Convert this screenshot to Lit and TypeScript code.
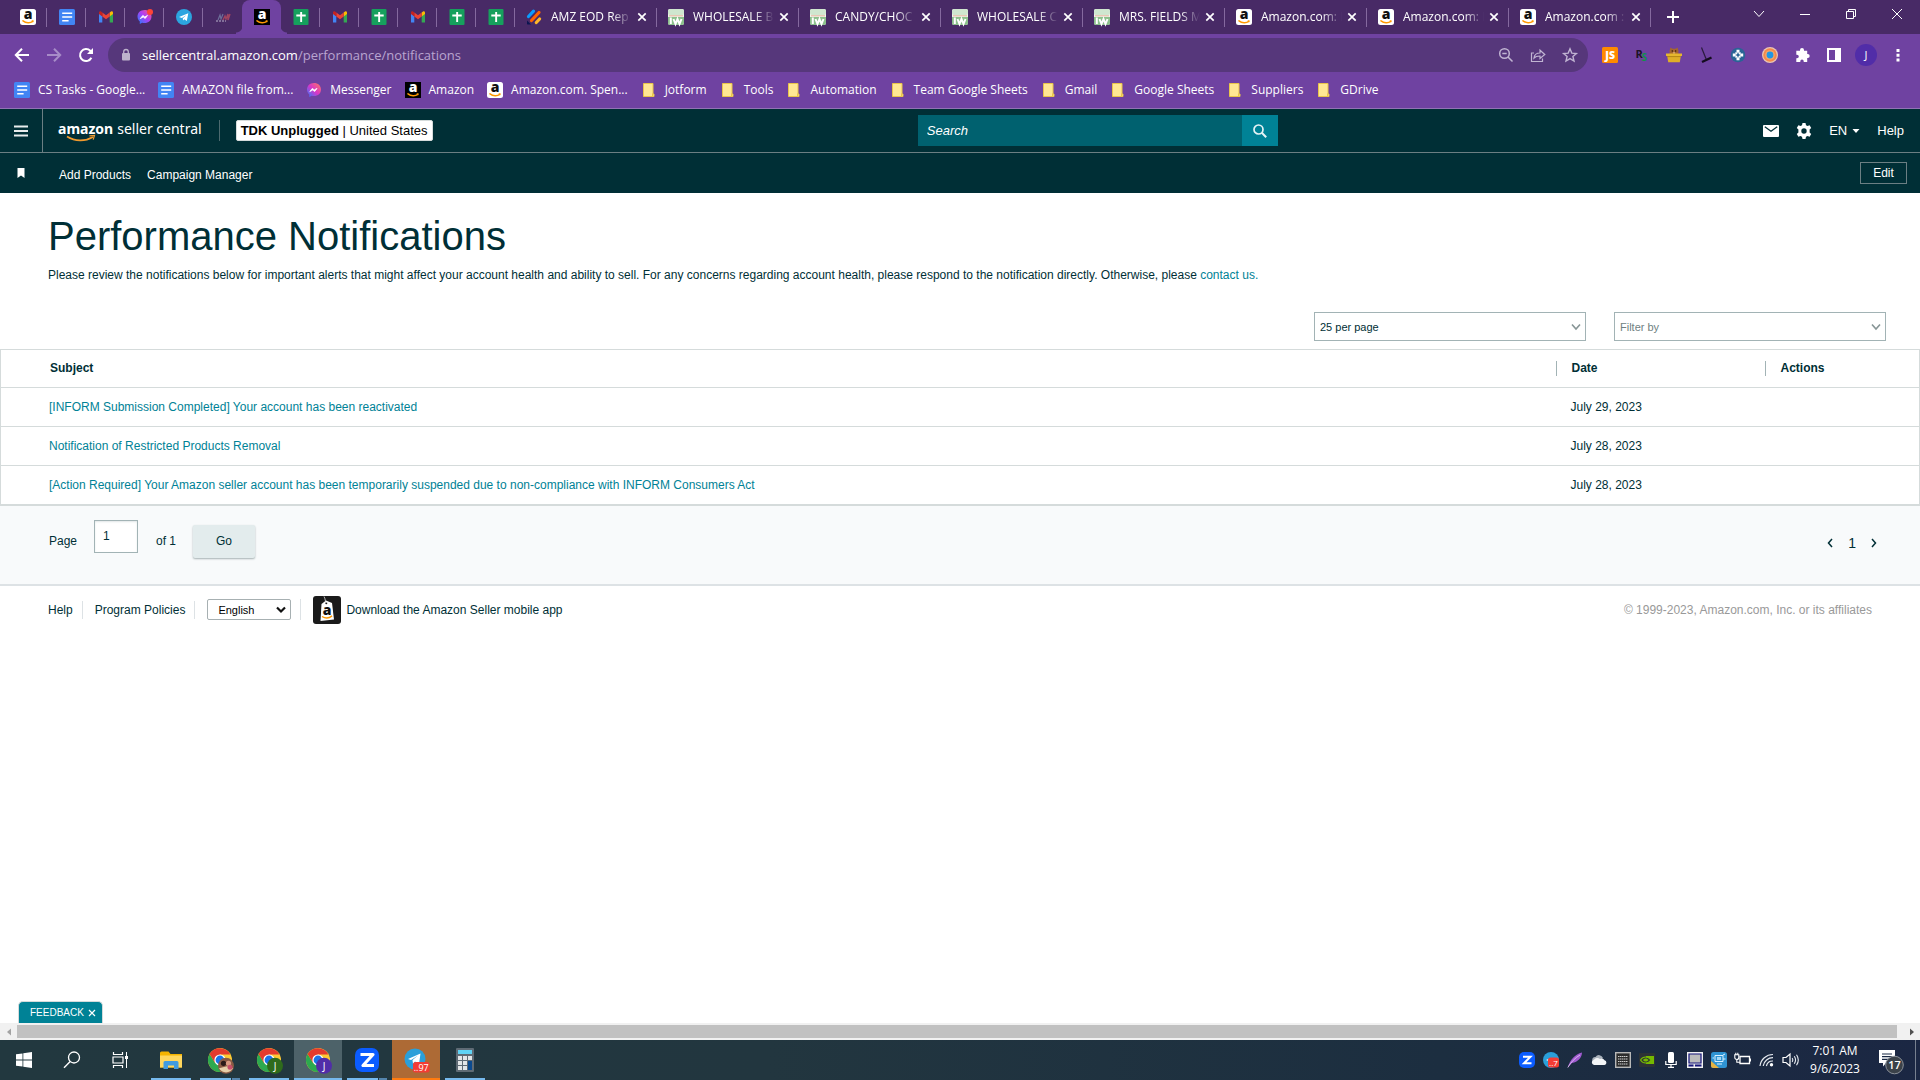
import { LitElement, html, svg, css } from "lit";
import type { TemplateResult } from "lit";
import { customElement, property, state } from "lit/decorators.js";
import { classMap } from "lit/directives/class-map.js";

/* ---------- icon library ---------- */

const smile = svg`<path d="M3 11.8c3 2.400 7.200 2.500 9.800.6" fill="none" stroke="#f90" stroke-width="1.5" stroke-linecap="round"/><path d="M11.400 11.400l2.200-.2-.5 2.200z" fill="#f90"/>`;

const chromeBase = svg`
  <circle cx="12" cy="12" r="12" fill="#fcc934"/>
  <path d="M1.6 6A12 12 0 0 0 12 24L17 14.8 12 12 7 14.8Z" fill="#2da94f"/>
  <path d="M1.6 6A12 12 0 0 1 22.4 6.5H12V12L7 14.8Z" fill="#e33b2e"/>
  <circle cx="12" cy="12" r="5.6" fill="#fff"/><circle cx="12" cy="12" r="4.4" fill="#1a73e8"/>`;

interface Glyph { w: number; h: number; art: TemplateResult<2> }
const g = (w: number, h: number, art: TemplateResult<2>): Glyph => ({ w, h, art });

const glyphs: Record<string, Glyph> = {
  amazonLight: g(16, 16, svg`<rect width="16" height="16" rx="2.5" fill="#fff"/><text x="8" y="9.6" text-anchor="middle" font-family="Open Sans, sans-serif" font-weight="800" font-size="14" fill="#111">a</text>${smile}`),
  amazonDark: g(16, 16, svg`<rect width="16" height="16" fill="#000"/><text x="8" y="9.6" text-anchor="middle" font-family="Open Sans, sans-serif" font-weight="800" font-size="14" fill="#fff">a</text>${smile}`),
  doc: g(16, 16, svg`<rect width="16" height="16" rx="1.5" fill="#4285f4"/><path d="M3.2 3.5h10v1.6h-10zM3.2 7.2h10v1.6h-10zM3.2 10.9h6.4v1.6H3.2z" fill="#fff"/>`),
  gmail: g(16, 16, svg`<path d="M1 13.5V4.5L4.3 7v6.5z" fill="#4285f4"/><path d="M15 13.5V4.5L11.7 7v6.5z" fill="#34a853"/><path d="M11.7 3.4L13 2.6c1-.6 2 0 2 1.200V5l-3.300 2.500z" fill="#fbbc04"/><path d="M4.300 3.400L8 6.200l3.700-2.800v4.100L8 10.300 4.300 7.500z" fill="#ea4335"/><path d="M1 5V3.800c0-1.200 1-1.800 2-1.200l1.300.8v4.100z" fill="#c5221f"/>`),
  messengerDot: g(16, 16, svg`<path d="M7.500 1C3.500 1 .5 3.800.5 7.500c0 2 .9 3.800 2.300 5v2.500l2.300-1.200c.8.200 1.600.3 2.400.3 4 0 7-2.800 7-6.600S11.500 1 7.500 1z" fill="url(#msg)"/><path d="M3.300 9.600l2.500-3.200 2 1.500 2.700-1.500L8.200 9.500 6.200 8z" fill="#fff" stroke="#fff" stroke-width=".8"/><circle cx="13" cy="3" r="3" fill="#ff4438"/><defs><linearGradient id="msg" x1="1" y1="0" x2="0" y2="1"><stop offset="0" stop-color="#ff5f6d"/><stop offset=".45" stop-color="#b13cf5"/><stop offset="1" stop-color="#1a84ff"/></linearGradient></defs>`),
  messenger: g(16, 16, svg`<path d="M8 1C4 1 1 3.800 1 7.500c0 2 .9 3.800 2.300 5v2.500l2.300-1.200c.8.200 1.600.3 2.400.3 4 0 7-2.800 7-6.600S12 1 8 1z" fill="url(#msb)"/><path d="M3.800 9.600l2.500-3.200 2 1.500L11 6.400 8.700 9.500l-2-1.500z" fill="#fff" stroke="#fff" stroke-width=".8"/><defs><linearGradient id="msb" x1="1" y1="0" x2="0" y2="1"><stop offset="0" stop-color="#ff7a5c"/><stop offset=".5" stop-color="#d936c8"/><stop offset="1" stop-color="#2b7bff"/></linearGradient></defs>`),
  telegram: g(16, 16, svg`<circle cx="8" cy="8" r="8" fill="#2ca5e0"/><path d="M3 7.900L12.300 4.200 10.800 12 8.300 10.200 7 11.500 6.800 9.300 10.500 6 5.900 8.900z" fill="#fff"/>`),
  script: g(16, 16, svg`<path d="M3 11l2-5 1 4 2-5" fill="none" stroke="#6d6f98" stroke-width="1.200"/><path d="M8 11l2-4 1 3 2-5v6l2-6" fill="none" stroke="#a04460" stroke-width="1.400"/><path d="M1 12h10" stroke="#b9b3cc" stroke-width="1" stroke-dasharray="2 1"/>`),
  sheet: g(16, 16, svg`<rect x=".5" width="15" height="16" rx="1" fill="#16a05d"/><path d="M7.200 3h1.900v10H7.200zM3.300 5.600h9.400v1.900H3.300z" fill="#fff"/>`),
  jotform: g(16, 16, svg`<g stroke-linecap="round" fill="none" stroke-width="3.200"><path d="M2.500 7.500l5-5.300" stroke="#0a9bff"/><path d="M5.500 11.500l7.500-8" stroke="#ff6100"/><path d="M10.300 13.500l3.300-3.500" stroke="#ffb629"/></g><path d="M1 11.500L5 15.600H2c-.6 0-1-.4-1-1z" fill="#0a1551"/>`),
  wholesale: g(16, 16, svg`<rect width="16" height="16" rx="2" fill="#eef5ec"/><rect width="16" height="6" rx="2" fill="#cfe6cf"/><path d="M0 8h16v6a2 2 0 0 1-2 2H2a2 2 0 0 1-2-2z" fill="#8cc08c"/><path d="M1 6.800h14" stroke="#e8a088" stroke-width=".8"/><path d="M2.800 8.500V15M5.500 10l2 5 2-5 2 5 2-5" stroke="#fff" stroke-width="2" fill="none"/>`),
  close: g(10, 10, svg`<path d="M1.300 1.300l7.400 7.400M8.700 1.300L1.300 8.700" stroke="#fff" stroke-width="1.700"/>`),
  plus: g(14, 14, svg`<path d="M7 1v12M1 7h12" stroke="#fff" stroke-width="2"/>`),
  winChevron: g(12, 12, svg`<path d="M1 3l5 5.500L11 3" fill="none" stroke="#fff"/>`),
  winMin: g(12, 12, svg`<path d="M1 6.500h10" stroke="#fff"/>`),
  winRestore: g(12, 12, svg`<path d="M1.500 3.500h7v7h-7zM3.500 3.500v-2h7v7h-2" fill="none" stroke="#fff"/>`),
  winClose: g(12, 12, svg`<path d="M1 1l10 10M11 1L1 11" stroke="#fff"/>`),
  back: g(16, 16, svg`<path d="M15 8H2.500M8 1.800L1.800 8 8 14.200" fill="none" stroke="#fff" stroke-width="2"/>`),
  forward: g(16, 16, svg`<path d="M1 8h12.500M8 1.800L14.200 8 8 14.200" fill="none" stroke="#a78cc8" stroke-width="2"/>`),
  reload: g(16, 16, svg`<path d="M13.400 10.800A6 6 0 1 1 12.300 3.800L14 5.500" fill="none" stroke="#fff" stroke-width="2"/><path d="M15 1v6H9z" fill="#fff"/>`),
  lock: g(12, 14, svg`<rect x="2" y="5" width="8" height="7.500" rx="1" fill="#bdb3cc"/><path d="M3.700 5.500V3.800a2.300 2.300 0 0 1 4.600 0v1.700" fill="none" stroke="#bdb3cc" stroke-width="1.300"/>`),
  zoomOut: g(16, 16, svg`<circle cx="6.500" cy="6.500" r="4.800" fill="none" stroke="#c0b4d2" stroke-width="1.500"/><path d="M10 10l4.500 4.500M4.300 6.500h4.400" stroke="#c0b4d2" stroke-width="1.500"/>`),
  share: g(16, 16, svg`<path d="M4 6H1.500v8.500h11v-3M4 11c.4-3.500 2.500-5 6-5V3.200L14.800 7.500 10 11.500V9c-3 0-4.700.5-6 2z" fill="none" stroke="#c0b4d2" stroke-width="1.200"/>`),
  star: g(16, 16, svg`<path d="M8 1.800l1.800 4.300 4.600.4-3.500 3 1.100 4.500L8 11.600 4 14l1.100-4.500-3.500-3 4.600-.4z" fill="none" stroke="#c0b4d2" stroke-width="1.400"/>`),
  js: g(16, 16, svg`<rect width="16" height="16" rx="1.500" fill="#ff8a00"/><text x="8.200" y="12" text-anchor="middle" font-family="Open Sans, sans-serif" font-weight="800" font-size="10.500" fill="#fff">JS</text>`),
  rs: g(16, 16, svg`<text x="1.500" y="11" font-family="Open Sans, sans-serif" font-weight="700" font-size="11" fill="#1c1226">R</text><text x="7.500" y="13.500" font-family="Open Sans, sans-serif" font-weight="700" font-size="10" fill="#0f9149">S</text>`),
  bear: g(16, 16, svg`<path d="M3.600 8V3.500L4.500.6l2 1.200h3l2-1.200.9 2.900V8z" fill="#a5652e"/><circle cx="6.300" cy="4" r=".7" fill="#2a1406"/><circle cx="9.700" cy="4" r=".7" fill="#2a1406"/><path d="M6.800 5.500h2.400L8 7z" fill="#f4d6b0"/><path d="M0 6.500h16v2.500H0z" fill="#e5b72d"/><path d="M1.200 9h13.600l-1 6.300H2.200z" fill="#dfae28"/><path d="M1.200 9.600h13.600" stroke="#a77a10" fill="none" stroke-width=".8"/>`),
  gavel: g(16, 16, svg`<path d="M3.500.5l5 12.500" stroke="#2a1a3c" stroke-width="1.200"/><path d="M4 15l9.500-4.500" stroke="#140c1e" stroke-width="2.400"/>`),
  helium: g(16, 16, svg`<circle cx="8" cy="8" r="7.300" fill="#2a6496"/><path d="M6.500 2.800h3v3h-3zM6.500 10.200h3v3h-3zM2.800 6.500h3v3h-3zM10.200 6.500h3v3h-3z" fill="#fff"/><path d="M5.500 5.500l5 5M10.500 5.500l-5 5" stroke="#fff" stroke-width="1.600"/><circle cx="8" cy="8" r="1.400" fill="#2a6496"/>`),
  orb: g(16, 16, svg`<circle cx="8" cy="8" r="8" fill="#eac6b4"/><circle cx="8" cy="8" r="6.800" fill="#f5894a"/><circle cx="8" cy="8" r="4.800" fill="#f3a76b"/><circle cx="8" cy="8" r="3.400" fill="#2196e3"/>`),
  puzzle: g(16, 16, svg`<path d="M6 3a2 2 0 0 1 4 0v.8h3.200V7h.5a2 2 0 0 1 0 4h-.5v4H9.700v-.8a1.700 1.700 0 0 0-3.400 0v.8H2.300v-3.700h.7a1.800 1.800 0 0 0 0-3.600h-.7V3.800H6z" fill="#fff"/>`),
  panel: g(16, 16, svg`<path d="M1 1h14v14H1zM3 3v10h6V3z" fill="#fff" fill-rule="evenodd"/>`),
  avatar: g(22, 22, svg`<circle cx="11" cy="11" r="11" fill="#512da8"/><text x="11" y="15" text-anchor="middle" font-family="Open Sans, sans-serif" font-size="11" fill="#fff">J</text>`),
  dots: g(4, 16, svg`<path d="M.5 2h3v3h-3zM.5 6.700h3v3h-3zM.5 11.400h3v3h-3z" fill="#fff"/>`),
  folder: g(16, 16, svg`<path d="M2.500 1.500h9.500v10.500h1v2.500H2.500z" fill="#ffe793" stroke="#e9c54a"/><path d="M11.500 14v-2.500" stroke="#e9c54a"/>`),
  menu: g(14, 12, svg`<path d="M0 1.500h14M0 6h14M0 10.500h14" stroke="#e8eded" stroke-width="1.800"/>`),
  swoosh: g(30, 7, svg`<path d="M1 1.500c8 5 18 5.200 26 .5" fill="none" stroke="#f09a2e" stroke-width="1.600"/><path d="M23.500.8l5-.4-1.300 4.200" fill="none" stroke="#f09a2e" stroke-width="1.200"/>`),
  search: g(16, 16, svg`<circle cx="6.500" cy="6.500" r="4.500" fill="none" stroke="#e6f4f6" stroke-width="1.700"/><path d="M9.800 9.800l4.400 4.400" stroke="#e6f4f6" stroke-width="2"/>`),
  mail: g(16, 12, svg`<rect width="16" height="12" rx="1" fill="#fff"/><path d="M1.800 1.800L8 6.200l6.200-4.400" fill="none" stroke="#002f36" stroke-width="1.300"/>`),
  gear: g(16, 16, svg`<path d="M6.500 0h3l.5 2.200 1.500.9 2.100-.8 1.600 2.700L13.600 6.600v2.800l1.600 1.600-1.600 2.700-2.100-.8-1.500.9-.5 2.200h-3L6 13.800l-1.500-.9-2.100.8L.8 11l1.600-1.600V6.600L.8 5l1.600-2.700 2.100.8L6 2.200zM8 5.300a2.700 2.700 0 1 0 0 5.400 2.700 2.700 0 0 0 0-5.400z" fill="#fff" fill-rule="evenodd"/>`),
  caret: g(8, 4, svg`<path d="M.5 0h7L4 4z" fill="#fff"/>`),
  flag: g(10, 10, svg`<path d="M1.500 0h7v10L5 7.500 1.500 10z" fill="#fff"/>`),
  chevron: g(10, 8, svg`<path d="M1 1.500l4 4.500 4-4.500" fill="none" stroke="#879596" stroke-width="1.600"/>`),
  chevronDark: g(10, 8, svg`<path d="M1 1.500L5 5.500 9 1.500" fill="none" stroke="#111" stroke-width="2.200"/>`),
  prev: g(6, 10, svg`<path d="M5 1L1.500 5 5 9" fill="none" stroke="#002f36" stroke-width="1.500"/>`),
  next: g(6, 10, svg`<path d="M1 1l3.500 4L1 9" fill="none" stroke="#002f36" stroke-width="1.500"/>`),
  app: g(28, 28, svg`<rect width="28" height="28" rx="3" fill="#1a1a1a"/><path d="M8.500 8L13 4.500l6 2.500 2 16.500L7.500 25z" fill="#fff"/><circle cx="13.300" cy="7.200" r="1" fill="#1a1a1a"/><path d="M13.300 7C12 5 12.500 3 11 .5" stroke="#ddd" stroke-width=".8" fill="none"/><text x="14" y="18.500" text-anchor="middle" font-family="Open Sans, sans-serif" font-weight="800" font-size="14" fill="#111">a</text><path d="M9 20.500c3.500 2.200 7 2 10-.6" stroke="#f90" stroke-width="1.400" fill="none"/>`),
  feedbackX: g(8, 8, svg`<path d="M1 1l6 6M7 1L1 7" stroke="#fff" stroke-width="1.200"/>`),
  left: g(4, 8, svg`<path d="M4 .5v7L0 4z" fill="#a3a3a3"/>`),
  right: g(4, 8, svg`<path d="M0 .5v7L4 4z" fill="#505050"/>`),
  windows: g(16, 16, svg`<path d="M0 2.300L6.500 1.400v6.200H0zM7.300 1.300L16 0v7.600H7.300zM0 8.400h6.500v6.200L0 13.700zM7.300 8.400H16V16l-8.700-1.300z" fill="#fff"/>`),
  lens: g(18, 18, svg`<circle cx="11" cy="6.500" r="5.500" fill="none" stroke="#fff" stroke-width="1.300"/><path d="M7.200 10.500L1 16.800" stroke="#fff" stroke-width="1.400"/>`),
  taskView: g(16, 16, svg`<path d="M1.500 0v2.500h9V0M1.500 16v-2.500h9V16M1 5h10v6H1z" fill="none" stroke="#fff" stroke-width="1.200"/><path d="M14.500 0v16" stroke="#fff"/><path d="M13 4h3v3h-3z" fill="#fff"/>`),
  explorer: g(22, 20, svg`<path d="M0 3a1.500 1.500 0 0 1 1.500-1.500h7L10.500 4H22v13.500H0z" fill="#f5b400"/><path d="M0 5.500h22v12H0z" fill="#ffd75e"/><path d="M3.500 19v-6.500A1.500 1.500 0 0 1 5 11h12a1.500 1.500 0 0 1 1.500 1.500V19H14v-3.500H8V19z" fill="#3f9be0"/>`),
  chromePhoto: g(24, 24, svg`${chromeBase}<circle cx="18" cy="17.800" r="8" fill="#8a5a44"/><circle cx="15.500" cy="15.300" r="2.600" fill="#2a1a18"/><circle cx="20.500" cy="15.300" r="2.600" fill="#d99a80"/><path d="M11 20.300a8 8 0 0 0 14 0l-6-2z" fill="#e7cfa8"/><circle cx="22" cy="19.300" r="2.500" fill="#c8506a"/>`),
  chromeGreen: g(24, 24, svg`${chromeBase}<circle cx="18" cy="17.800" r="8" fill="#2f6b1c"/><text x="18" y="21.500" text-anchor="middle" font-family="Open Sans, sans-serif" font-size="10" fill="#fff">J</text>`),
  chromePurple: g(24, 24, svg`${chromeBase}<circle cx="18" cy="17.800" r="8" fill="#512da8"/><text x="18" y="21.500" text-anchor="middle" font-family="Open Sans, sans-serif" font-size="10" fill="#fff">J</text>`),
  zoomApp: g(24, 24, svg`<rect width="24" height="24" rx="7" fill="#0b5cff"/><path d="M5.500 6.500h12.500L8 17.500h11" fill="none" stroke="#fff" stroke-width="3.200" stroke-linejoin="round"/>`),
  telegramApp: g(28, 26, svg`<circle cx="13" cy="12" r="10.500" fill="#2a9fd9"/><path d="M6 12L18.500 6.500 17 17l-4-2.500L11 17l-.5-4L16 8.500 9 13z" fill="#fff"/><rect x="11" y="15" width="16.500" height="10.500" rx="2.500" fill="#f23c34"/><text x="19.200" y="23.800" text-anchor="middle" font-family="Open Sans, sans-serif" font-size="9" fill="#fff">..97</text>`),
  calc: g(18, 24, svg`<rect width="18" height="24" rx="1" fill="#5f6b75"/><path d="M2 2h14v4H2z" fill="#5fd3f5"/><path d="M2 8h4v4H2zM7 8h4v4H7zM12 8h4v4h-4zM2 13h4v4H2zM7 13h4v4H7zM2 18h4v4H2zM7 18h4v4H7z" fill="#e3e6e8"/><path d="M12 13h4v9h-4z" fill="#0b4a8f"/>`),
  trayZoom: g(16, 16, svg`<rect width="16" height="16" rx="5" fill="#0b5cff"/><path d="M4 4.700h7.500L5 11.300h7.500" fill="none" stroke="#fff" stroke-width="2"/>`),
  trayTelegram: g(16, 16, svg`<circle cx="8" cy="8" r="8" fill="#2a9fd9"/><path d="M3 8l5-2v4z" fill="#fff"/><rect x="5" y="5.500" width="11" height="10" rx="2.500" fill="#f23c34"/><text x="10.500" y="13.800" text-anchor="middle" font-family="Open Sans, sans-serif" font-size="8" fill="#fff">..7</text>`),
  feather: g(16, 16, svg`<path d="M1 15C3 8 8 2 15 .5c0 5-4 9.500-10 10.500z" fill="#a05bd0"/><path d="M.8 15.500C4 10 8 6 13 3" stroke="#e2bff5" fill="none" stroke-width=".9"/>`),
  cloud: g(16, 16, svg`<path d="M4 11a3 3 0 0 1 .5-6 4.200 4.200 0 0 1 7.500 1l-6 5z" fill="#a9b1bb"/><path d="M3 13a2.700 2.700 0 0 1 0-5.300 4 4 0 0 1 6-.7 3.300 3.300 0 0 1 4.500 1.300A2.400 2.400 0 0 1 13.500 13z" fill="#f3f5f7"/>`),
  chip: g(16, 16, svg`<rect x=".7" y=".7" width="14.600" height="14.600" fill="#2c2c2c" stroke="#b8b8b8" stroke-width="1.400"/><path d="M3 4.500h10M3 7h10M3 9.500h10M3 12h10" stroke="#cfcfcf" stroke-width="1" stroke-dasharray="1.500 .5"/>`),
  nvidia: g(16, 16, svg`<rect y="1" width="16" height="14" rx="1" fill="#2d3236"/><path d="M7 4h8v8H7z" fill="#76b900"/><path d="M1.500 8C4 4 9 4 12 8c-3 4-8 4-10.500 0z" fill="#2d3236" stroke="#76b900" stroke-width="1.100"/><path d="M4 8c1.500-2 4-2 5.500 0-1.500 2-4 2-5.500 0z" fill="#76b900"/>`),
  mic: g(16, 16, svg`<rect x="5" y="0" width="6" height="11" rx="1.500" fill="#fff"/><path d="M2.800 9v3.500h10.400V9M8 12.500V15M5 15.400h6" fill="none" stroke="#fff" stroke-width="1.200"/>`),
  monitor: g(16, 16, svg`<rect x=".6" y=".6" width="14.800" height="14.800" fill="#e6e6e6" stroke="#f2f2f2" stroke-width="1.200"/><path d="M2 2h12v9H2z" fill="#bcbcbc" stroke="#15157c" stroke-width="1.200"/><path d="M1.500 12.500h5v2h-5zM8 12.500h6.500v2H8z" fill="#15157c"/>`),
  intel: g(16, 16, svg`<rect width="16" height="16" rx="2.500" fill="#2f93d2"/><path d="M0 9v4.500A2.500 2.500 0 0 0 2.500 16H8z" fill="#e6b23f"/><path d="M4 3.500h8v6H4zM6 12h5M12 3l2-1M12 7h2.500M3 6H1.500" fill="none" stroke="#d9f0ff"/><path d="M6 5h4v3H6z" fill="#a3d8f7"/>`),
  battery: g(16, 16, svg`<path d="M5 4.500h9.500v7H5z" fill="none" stroke="#fff" stroke-width="1.300"/><path d="M14.500 6.500H16v3h-1.500z" fill="#fff"/><path d="M-.2 2.500v3a2 2 0 0 0 4 0v-3M.8.800v2M2.800.800v2M-.8 2.800h5.200M1.800 7.500v2.800H5" fill="none" stroke="#fff" stroke-width="1.100"/>`),
  wifi: g(16, 16, svg`<path d="M1 14A13 13 0 0 1 14 2.500M4.200 14A9.800 9.800 0 0 1 14 5.700M7.400 14A6.500 6.500 0 0 1 14 9" fill="none" stroke="#e6eaf0" stroke-width="1.200"/><circle cx="12.500" cy="12.800" r="1.700" fill="#fff"/>`),
  sound: g(16, 16, svg`<path d="M0 5.500h3L7 2v12l-4-3.500H0z" fill="none" stroke="#fff" stroke-width="1.200"/><path d="M9.200 6c.8 1.200.8 2.800 0 4M11.300 4.300c1.500 2.200 1.500 5.200 0 7.400M13.500 2.700c2.200 3.200 2.200 7.400 0 10.600" fill="none" stroke="#e6eaf0" stroke-width="1.100"/>`),
  notice: g(28, 28, svg`<path d="M1 4h16v13H8l-3 3.500V17H1z" fill="#fff"/><path d="M4 8h10M4 10.700h10M4 13.400h7" stroke="#1b2a44" stroke-width="1.200"/><circle cx="16.500" cy="19" r="8.800" fill="#3a4149" stroke="#8b9199" stroke-width="1"/><text x="16.500" y="23" text-anchor="middle" font-family="Open Sans, sans-serif" font-weight="600" font-size="11" fill="#fff">17</text>`),
};

const icon = (name: string) => {
  const { w, h, art } = glyphs[name];
  return html`<svg class="icon" width=${w} height=${h} viewBox="0 0 ${w} ${h}" aria-hidden="true">${art}</svg>`;
};

const reset = css`
  :host { display: block; }
  * { box-sizing: border-box; }
  .icon { display: block; flex: none; overflow: visible; }
  button, input, select { font: inherit; color: inherit; margin: 0; padding: 0; border: 0; background: none; border-radius: 0; }
  button { display: flex; align-items: center; justify-content: center; cursor: pointer; }
  a { color: inherit; text-decoration: none; }
`;

/* ---------- browser window ---------- */

const pinned = ["amazonLight", "doc", "gmail", "messengerDot", "telegram", "script", "amazonDark", "sheet", "gmail", "sheet", "gmail", "sheet", "sheet"];
const activeTab = 6;

const tabs = [
  { icon: "jotform", title: "AMZ EOD Rep" },
  { icon: "wholesale", title: "WHOLESALE B" },
  { icon: "wholesale", title: "CANDY/CHOC" },
  { icon: "wholesale", title: "WHOLESALE C" },
  { icon: "wholesale", title: "MRS. FIELDS M" },
  { icon: "amazonLight", title: "Amazon.com: M" },
  { icon: "amazonLight", title: "Amazon.com: M" },
  { icon: "amazonLight", title: "Amazon.com :" },
];

const bookmarks = [
  { icon: "doc", title: "CS Tasks - Google..." },
  { icon: "doc", title: "AMAZON file from..." },
  { icon: "messenger", title: "Messenger" },
  { icon: "amazonDark", title: "Amazon" },
  { icon: "amazonLight", title: "Amazon.com. Spen..." },
  { icon: "folder", title: "Jotform" },
  { icon: "folder", title: "Tools" },
  { icon: "folder", title: "Automation" },
  { icon: "folder", title: "Team Google Sheets" },
  { icon: "folder", title: "Gmail" },
  { icon: "folder", title: "Google Sheets" },
  { icon: "folder", title: "Suppliers" },
  { icon: "folder", title: "GDrive" },
];

@customElement("browser-chrome")
export class BrowserChrome extends LitElement {
  static styles = [reset, css`
    :host { background: #6f42a1; color: #fff; font: 12px/16px "Open Sans", "Noto Sans", sans-serif; border-bottom: 1px solid #9173b4; }
    .strip { display: flex; height: 34px; padding-left: 8px; background: #482a66; }
    .pin, .tab { position: relative; display: flex; align-items: center; height: 34px; }
    .pin { width: 39px; justify-content: center; }
    .pin::after, .tab::after { content: ""; position: absolute; right: 0; top: 8px; width: 1px; height: 19px; background: #85699f; }
    .pin.before::after { display: none; }
    .pin.active { background: #6f42a1; border-radius: 8px 8px 0 0; }
    .pin.active::before, .pin.active::after { content: ""; position: absolute; top: auto; bottom: 0; width: 6px; height: 8px; background: radial-gradient(circle at 0 0, transparent 6px, #6f42a1 7px); }
    .pin.active::before { left: -6px; }
    .pin.active::after { right: -6px; background: radial-gradient(circle at 100% 0, transparent 6px, #6f42a1 7px); }
    .tab { width: 142px; padding: 0 10px 0 11px; gap: 9px; }
    .label { flex: 1; min-width: 0; white-space: nowrap; text-align: left; mask-image: linear-gradient(90deg, #000 75%, transparent); }
    .tab button { flex: none; margin-left: -4px; }
    .new { width: 44px; }
    .controls { display: flex; margin-left: auto; }
    .controls button { width: 46px; height: 28px; }
    .bar { display: flex; align-items: center; height: 38px; padding: 4px 6px 0; }
    .nav { width: 32px; height: 32px; }
    .omnibox { flex: 1; display: flex; align-items: center; height: 34px; margin: 0 6px; padding: 0 2px 0 12px; border-radius: 17px; background: #56377b; font-size: 13px; }
    .url { flex: 1; margin-left: 10px; color: #b9a5d0; }
    .host { color: #fff; }
    .marks { display: flex; align-items: center; height: 36px; padding-left: 14px; gap: 13px; }
    .mark { display: flex; gap: 8px; white-space: nowrap; }
  `];

  render() {
    return html`
      <div class="strip">
        ${pinned.map((name, i) => html`
          <button class=${classMap({ pin: true, active: i === activeTab, before: i === activeTab - 1 })} aria-label="Pinned tab">${icon(name)}</button>`)}
        ${tabs.map((t) => html`
          <div class="tab">${icon(t.icon)}<span class="label">${t.title}</span><button aria-label="Close tab">${icon("close")}</button></div>`)}
        <button class="new" aria-label="New tab">${icon("plus")}</button>
        <div class="controls">
          ${["winChevron", "winMin", "winRestore", "winClose"].map((n) => html`<button aria-label="Window control">${icon(n)}</button>`)}
        </div>
      </div>
      <div class="bar">
        ${["back", "forward", "reload"].map((n) => html`<button class="nav" aria-label=${n}>${icon(n)}</button>`)}
        <div class="omnibox">
          ${icon("lock")}
          <span class="url"><span class="host">sellercentral.amazon.com</span>/performance/notifications</span>
          ${["zoomOut", "share", "star"].map((n) => html`<button class="nav" aria-label=${n}>${icon(n)}</button>`)}
        </div>
        ${["js", "rs", "bear", "gavel", "helium", "orb", "puzzle", "panel", "avatar", "dots"].map((n) => html`<button class="nav" aria-label=${n}>${icon(n)}</button>`)}
      </div>
      <nav class="marks" aria-label="Bookmarks">
        ${bookmarks.map((b) => html`<a class="mark" href="#">${icon(b.icon)}${b.title}</a>`)}
      </nav>`;
  }
}

/* ---------- site header ---------- */

@customElement("seller-header")
export class SellerHeader extends LitElement {
  static styles = [reset, css`
    :host { background: #002f36; color: #fff; font: 13px/16px "Liberation Sans", Arial, sans-serif; }
    .top { display: flex; align-items: center; justify-content: space-between; height: 44px; padding-right: 16px; border-bottom: 1px solid #6b7f83; }
    .group { display: flex; align-items: center; }
    .menu { width: 43px; height: 43px; border-right: 1px solid #6b7f83; }
    .logo { position: relative; display: flex; gap: 4px; margin: 0 0 4px 15px; font: 14px/20px "Noto Sans", "Open Sans", sans-serif; }
    .brand { font-weight: 700; }
    .swoosh { position: absolute; left: 8px; top: 16px; }
    .account { margin-left: 17px; border-left: 1px solid #4d6a6f; padding-left: 16px; }
    .store { height: 21px; padding: 0 4px; border: 1px solid #d5dbdb; border-radius: 2px; background: #fff; color: #000; }
    .search { display: flex; width: 360px; height: 31px; }
    .search input { flex: 1; padding: 0 9px; background: #00616f; font-style: italic; color: #fff; }
    .search input::placeholder { color: #fff; opacity: 1; }
    .search button { width: 36px; background: #008296; }
    .tools { gap: 17px; }
    .lang { gap: 5px; }
    .sub { display: flex; align-items: center; height: 40px; padding: 0 13px 0 16px; font-size: 12px; }
    .sub a { margin-right: 16px; padding-top: 3px; }
    .flag { width: 10px; margin-right: 33px; }
    .edit { margin-left: auto; width: 47px; height: 22px; border: 1px solid #6b7f83; }
  `];

  render() {
    return html`
      <header class="top">
        <div class="group">
          <button class="menu" aria-label="Menu">${icon("menu")}</button>
          <a class="logo" href="#"><span class="brand">amazon</span><span>seller central</span><span class="swoosh">${icon("swoosh")}</span></a>
          <div class="account"><button class="store"><span><b>TDK Unplugged</b> | United States</span></button></div>
        </div>
        <form class="search" role="search">
          <input type="search" placeholder="Search" aria-label="Search">
          <button type="button" aria-label="Submit search">${icon("search")}</button>
        </form>
        <div class="group tools">
          <button aria-label="Messages">${icon("mail")}</button>
          <button aria-label="Settings">${icon("gear")}</button>
          <button class="lang">EN ${icon("caret")}</button>
          <a href="#">Help</a>
        </div>
      </header>
      <nav class="sub">
        <button class="flag" aria-label="Bookmarks">${icon("flag")}</button>
        <a href="#">Add Products</a><a href="#">Campaign Manager</a>
        <button class="edit">Edit</button>
      </nav>`;
  }
}

/* ---------- notifications page ---------- */

interface Notice { subject: string; date: string }

@customElement("notifications-page")
export class NotificationsPage extends LitElement {
  @property({ attribute: false }) notices: Notice[] = [
    { subject: "[INFORM Submission Completed] Your account has been reactivated", date: "July 29, 2023" },
    { subject: "Notification of Restricted Products Removal", date: "July 28, 2023" },
    { subject: "[Action Required] Your Amazon seller account has been temporarily suspended due to non-compliance with INFORM Consumers Act", date: "July 28, 2023" },
  ];
  @state() private page = "1";

  static styles = [reset, css`
    :host { background: #fff; color: #002f36; font: 12px/18px "Liberation Sans", Arial, sans-serif; }
    .intro { padding: 19px 48px 0; }
    h1 { margin: 0 0 6px; font-size: 40px; line-height: 48px; font-weight: 400; }
    p { margin: 0; }
    .link { color: #008296; }
    .filters { display: flex; justify-content: flex-end; gap: 28px; padding: 28px 34px 8px; font-size: 11px; }
    .pick { position: relative; display: flex; align-items: center; }
    .pick .icon { position: absolute; right: 5px; pointer-events: none; }
    .pick select { appearance: none; width: 272px; height: 29px; padding: 0 5px; border: 1px solid #a2b3b5; background: #fff; }
    .muted select { color: #6f7f82; }
    table { width: 100%; border-collapse: collapse; table-layout: fixed; border: 1px solid #d5dbdb; border-bottom-width: 2px; }
    th, td { height: 39px; padding: 0; border-top: 1px solid #d5dbdb; text-align: left; vertical-align: middle; }
    th { height: 38px; }
    td:first-child { padding-left: 48px; }
    th:first-child { padding-left: 49px; }
    td:nth-child(2) { padding-left: 15px; }
    .date { width: 209px; }
    .actions { width: 155px; }
    .head { display: block; line-height: 15px; }
    .date .head, .actions .head { border-left: 1px solid #a2b3b5; padding-left: 15px; }
    .pager { display: flex; align-items: flex-end; min-height: 80px; padding: 14px 43px 26px 49px; background: #f8fafb; border-bottom: 2px solid #dde2e5; line-height: 34px; }
    .pager input { align-self: flex-start; width: 44px; height: 33px; margin: 0 18px 0 17px; padding: 0 8px; border: 1px solid #a2b3b5; background: #fff; box-shadow: inset 0 1px 2px #e1e6e7; }
    .go { width: 62px; height: 33px; margin: 0 auto 0 17px; border-radius: 2px; background: #e3eced; box-shadow: 0 1px 2px #a5b0b2; }
    .pages { display: flex; align-items: center; gap: 15px; height: 30px; font-size: 14px; line-height: 18px; }
    footer { display: flex; align-items: center; height: 48px; padding: 0 48px; }
    .cell { padding-right: 9px; margin-right: 12px; border-right: 1px solid #dde2e5; line-height: 18px; }
    .lang { width: 84px; height: 21px; }
    .pick.lang select { width: 84px; height: 21px; padding: 0 10px; border: 1px solid #a7b0b2; border-radius: 2px; font-size: 11px; color: #000; }
    .app { display: flex; align-items: center; gap: 5px; }
    .copy { margin-left: auto; color: #999; }
  `];

  render() {
    return html`
      <section class="intro">
        <h1>Performance Notifications</h1>
        <p>Please review the notifications below for important alerts that might affect your account health and ability to sell. For any concerns regarding account health, please respond to the notification directly. Otherwise, please <a class="link" href="#">contact us.</a></p>
      </section>
      <div class="filters">
        <label class="pick"><select aria-label="Rows per page"><option>25 per page</option></select>${icon("chevron")}</label>
        <label class="pick muted"><select aria-label="Filter by"><option>Filter by</option></select>${icon("chevron")}</label>
      </div>
      <table>
        <thead><tr>
          <th><span class="head">Subject</span></th>
          <th class="date"><span class="head">Date</span></th>
          <th class="actions"><span class="head">Actions</span></th>
        </tr></thead>
        <tbody>
          ${this.notices.map((n) => html`<tr><td><a class="link" href="#">${n.subject}</a></td><td>${n.date}</td><td></td></tr>`)}
        </tbody>
      </table>
      <div class="pager">
        <label for="page">Page</label>
        <input id="page" .value=${this.page} @input=${(e: Event) => { this.page = (e.target as HTMLInputElement).value; }}>
        <span>of 1</span>
        <button class="go">Go</button>
        <div class="pages">
          <button aria-label="Previous page">${icon("prev")}</button><span>1</span><button aria-label="Next page">${icon("next")}</button>
        </div>
      </div>
      <footer>
        <a class="cell" href="#">Help</a>
        <a class="cell" href="#">Program Policies</a>
        <div class="cell"><label class="pick lang"><select aria-label="Language"><option>English</option></select>${icon("chevronDark")}</label></div>
        <a class="app" href="#">${icon("app")}Download the Amazon Seller mobile app</a>
        <span class="copy">© 1999-2023, Amazon.com, Inc. or its affiliates</span>
      </footer>`;
  }
}

/* ---------- desktop task bar ---------- */

const running = [
  { icon: "explorer", kind: "open" },
  { icon: "chromePhoto", kind: "open many" },
  { icon: "chromeGreen", kind: "open" },
  { icon: "chromePurple", kind: "open current" },
  { icon: "zoomApp", kind: "open many" },
  { icon: "telegramApp", kind: "open alert" },
  { icon: "calc", kind: "open" },
];

@customElement("task-bar")
export class TaskBar extends LitElement {
  static styles = [reset, css`
    :host { display: flex; height: 40px; color: #fff; background: linear-gradient(90deg, #22383f, #22363f 40%, #1c2e40 75%, #1b2743); font: 12px/18px "Open Sans", "Noto Sans", sans-serif; }
    .sys { width: 48px; height: 40px; }
    .apps { display: flex; gap: 1px; margin-left: 3px; }
    .open { position: relative; width: 48px; height: 40px; }
    .open::after { content: ""; position: absolute; left: 4px; right: 4px; bottom: 0; height: 2px; background: #76b9ed; }
    .many::after { background: linear-gradient(90deg, #76b9ed 31px, #22363f 31px, #22363f 32px, #5585ad 32px); }
    .current { background: #4d6269; }
    .current::after { left: 0; right: 0; }
    .alert { background: #ad6a35; }
    .alert::after { left: 0; right: 0; background: #ff7b0f; }
    .tray { display: flex; align-items: center; gap: 8px; margin-left: auto; }
    .clock { width: 60px; margin: 2px 13px 0 6px; text-align: center; }
    .end { width: 5px; margin-left: 9px; border-left: 1px solid #77808f; }
  `];

  render() {
    return html`
      ${["windows", "lens", "taskView"].map((n) => html`<button class="sys" aria-label=${n}>${icon(n)}</button>`)}
      <div class="apps">${running.map((r) => html`<button class=${r.kind} aria-label=${r.icon}>${icon(r.icon)}</button>`)}</div>
      <div class="tray">
        ${["trayZoom", "trayTelegram", "feather", "cloud", "chip", "nvidia", "mic", "monitor", "intel", "battery", "wifi", "sound"].map((n) => icon(n))}
      </div>
      <div class="clock">7:01 AM<br>9/6/2023</div>
      <button aria-label="Notifications">${icon("notice")}</button>
      <div class="end"></div>`;
  }
}

/* ---------- shell ---------- */

@customElement("app-root")
export class AppRoot extends LitElement {
  static styles = [reset, css`
    :host { display: flex; flex-direction: column; min-height: 100vh; background: #fff; font-family: "Liberation Sans", Arial, sans-serif; }
    .view { position: relative; flex: 1; }
    .feedback { position: absolute; left: 18px; bottom: 0; justify-content: flex-start; gap: 4px; width: 85px; height: 22px; padding-left: 11px; border: 1px solid #d5dbdb; border-bottom: 0; border-radius: 5px 5px 0 0; background: #008296; color: #fff; font-size: 10px; }
    .scroll { display: flex; align-items: center; height: 17px; background: #f1f1f1; }
    .scroll button { width: 17px; height: 17px; }
    .thumb { flex: 1; height: 13px; background: #c1c1c1; }
    .scroll button.far { width: 23px; padding-left: 6px; }
  `];

  render() {
    return html`
      <browser-chrome></browser-chrome>
      <seller-header></seller-header>
      <main class="view">
        <notifications-page></notifications-page>
        <button class="feedback">FEEDBACK ${icon("feedbackX")}</button>
      </main>
      <div class="scroll">
        <button aria-label="Scroll left">${icon("left")}</button>
        <div class="thumb"></div>
        <button class="far" aria-label="Scroll right">${icon("right")}</button>
      </div>
      <task-bar></task-bar>`;
  }
}
